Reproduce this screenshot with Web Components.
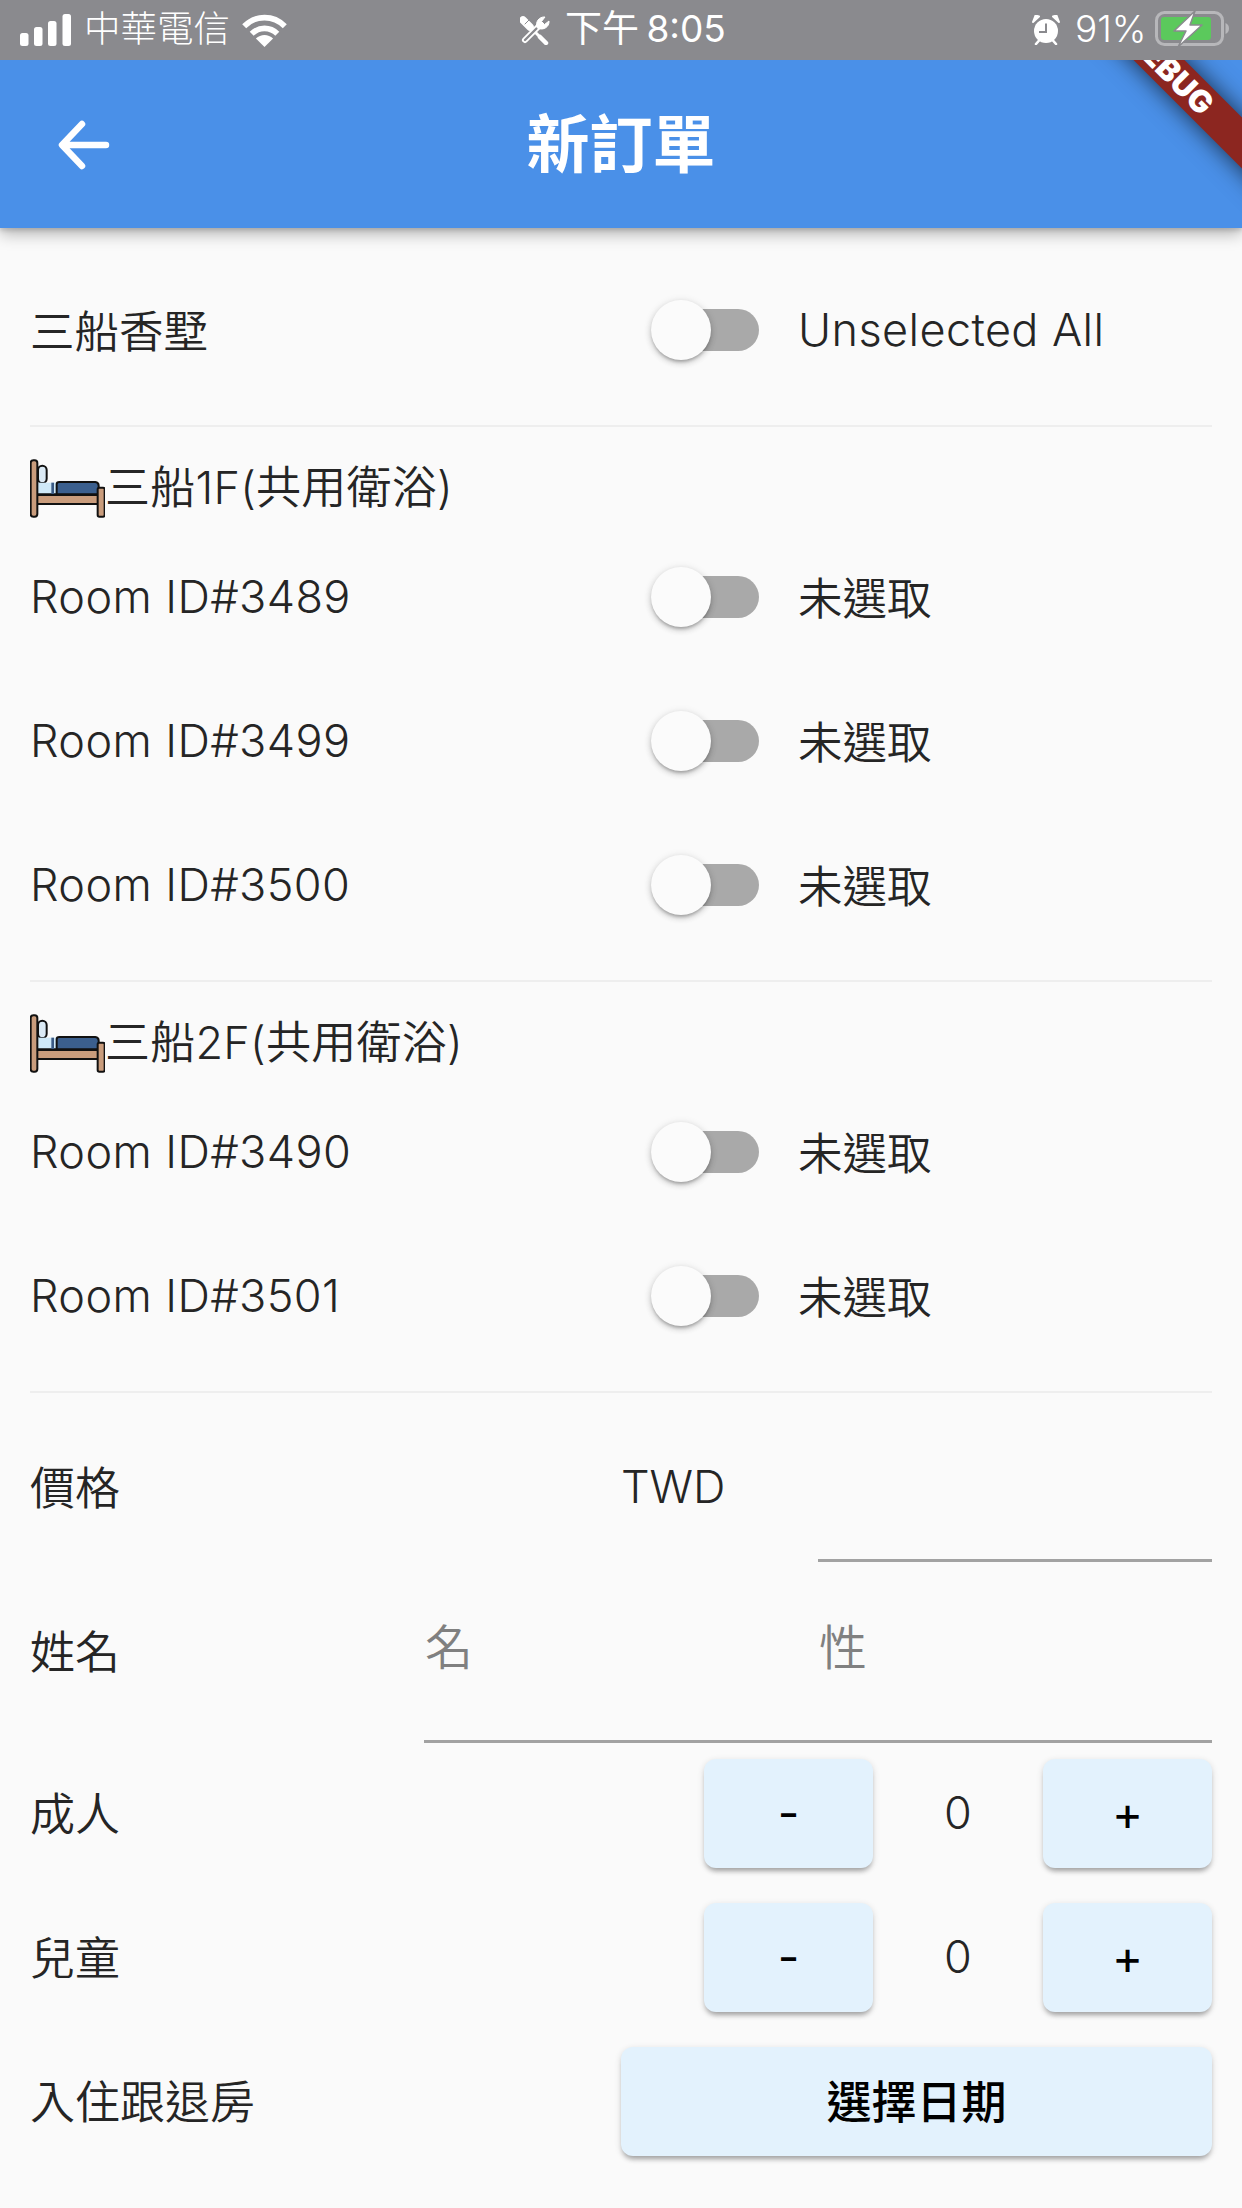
<!DOCTYPE html>
<html lang="zh-Hant"><head><meta charset="utf-8"><title>新訂單</title>
<style>
html,body{margin:0;padding:0;background:#fafafa}
body{width:1242px;height:2208px;overflow:hidden;font-family:Inter,"Noto Sans CJK TC",sans-serif;font-weight:350;color:#252525}
.cjk{display:inline-block;padding-top:3px;font-size:44.5px;letter-spacing:0}
</style></head><body>
<order-page>
  <status-bar slot="status"></status-bar>
  <app-bar slot="bar" title="新訂單"></app-bar>
  <switch-row><span slot="label" class="cjk">三船香墅</span><span slot="state">Unselected All</span></switch-row>
  <h-rule></h-rule>
  <section-title>三船1F(共用衛浴)</section-title>
  <switch-row><span slot="label">Room ID#3489</span><span slot="state" class="cjk">未選取</span></switch-row>
  <switch-row><span slot="label">Room ID#3499</span><span slot="state" class="cjk">未選取</span></switch-row>
  <switch-row><span slot="label">Room ID#3500</span><span slot="state" class="cjk">未選取</span></switch-row>
  <h-rule></h-rule>
  <section-title>三船2F(共用衛浴)</section-title>
  <switch-row><span slot="label">Room ID#3490</span><span slot="state" class="cjk">未選取</span></switch-row>
  <switch-row><span slot="label">Room ID#3501</span><span slot="state" class="cjk">未選取</span></switch-row>
  <h-rule></h-rule>
  <price-row></price-row>
  <name-row></name-row>
  <action-rows></action-rows>
</order-page>
<script>
function def(name, html, init){
  const t=document.createElement('template');t.innerHTML=html;
  customElements.define(name,class extends HTMLElement{
    constructor(){super();this.attachShadow({mode:'open'}).appendChild(t.content.cloneNode(true));}
    connectedCallback(){if(init)init(this);}
  });
}
def('order-page',`<style>
:host{display:block;width:1242px;height:2208px;position:relative;overflow:hidden;background:#fafafa}
.top{display:flex;flex-direction:column}
.body{display:flex;flex-direction:column;padding:30px 30px 0}
</style><div class="top"><slot name="status"></slot><slot name="bar"></slot></div><div class="body"><slot></slot></div>`);

def('status-bar',`<style>
:host{display:flex;align-items:center;height:60px;background:#8a8a8e;color:#fff;position:relative;z-index:3;font:300 37px/60px Inter,"Noto Sans CJK TC",sans-serif}
.l,.c,.r{display:flex;align-items:center;height:60px}
.l{width:500px;padding-left:20px;box-sizing:border-box}
.c{width:532px;padding-left:20px;box-sizing:border-box}
.r{flex:1}
svg{display:block;flex:none}
.carrier{margin-left:13px;margin-right:12px;font-size:36.5px;padding-bottom:2px;white-space:nowrap}
.time{margin-left:15px;white-space:nowrap;padding-bottom:2px;font-weight:400;word-spacing:-3px}
.pct{margin-left:15px;margin-right:8px;white-space:nowrap;padding-bottom:2px}
</style>
<div class="l">
<svg width="51" height="33" viewBox="0 0 51 33" fill="#fff"><rect x="0" y="19" width="8.5" height="13" rx="2.5"/><rect x="14" y="13" width="8.5" height="19" rx="2.5"/><rect x="28" y="7" width="8.5" height="25" rx="2.5"/><rect x="42.5" y="0" width="8.5" height="32" rx="2.5"/></svg>
<span class="carrier">中華電信</span>
<svg width="45" height="33" viewBox="0 0 45 33" fill="none" stroke="#fff" stroke-width="5.6"><path d="M2.2 12.2C13.5 .7 31.5 .7 42.8 12.2"/><path d="M9.7 19.8C16.8 12.6 28.2 12.6 35.3 19.8"/><path d="M22.5 33L13.9 24.6C18.6 19.9 26.4 19.9 31.1 24.6Z" fill="#fff" stroke="none"/></svg>
</div>
<div class="c">
<svg width="30" height="30" viewBox="0 0 30 30" fill="none" stroke-linecap="round"><path d="M3 5L10 12" stroke="#fff" stroke-width="7.5"/><path d="M5 9L9 5" stroke="#8a8a8e" stroke-width="1"/><path d="M10 12L20 22" stroke="#fff" stroke-width="3"/><path d="M20 22L26 28" stroke="#fff" stroke-width="4.5"/><path d="M5 25L18 12" stroke="#fff" stroke-width="6"/><path d="M5 25L18 12" stroke="#8a8a8e" stroke-width="2.4"/><path d="M17 12.5C15 7 19 1.5 25 2L21.5 6.5L24.5 9.5L29 6C29.5 12 23.5 15.5 18.5 13.5Z" fill="#fff" stroke="#fff" stroke-width="1"/></svg>
<span class="time">下午 8:05</span>
</div>
<div class="r">
<svg width="28" height="30" viewBox="0 0 28 30"><circle cx="14" cy="16" r="12" fill="#fff"/><path d="M1 7L7 1.5L3.5 .5ZM27 7L21 1.5L24.5 .5Z" fill="#fff" stroke="#fff" stroke-width="2" stroke-linejoin="round"/><path d="M4 29L7.5 25M24 29L20.5 25" stroke="#fff" stroke-width="2.6" stroke-linecap="round"/><path d="M14 8.5V17H7" fill="none" stroke="#8a8a8e" stroke-width="2"/></svg>
<span class="pct">91%</span>
<svg width="74" height="36" viewBox="0 0 74 36" style="margin-bottom:2px"><rect x="1.5" y="1.5" width="66" height="32" rx="8" fill="none" stroke="#b7b7ba" stroke-width="3"/><rect x="6" y="6" width="50" height="23" rx="3" fill="#5bc95c"/><path d="M70.5 12C73 13 74 15 74 17.5S73 22 70.5 23Z" fill="#b7b7ba"/><path d="M40 0L19 20H31L23 36L47 14H35Z" fill="#fff" stroke="#8a8a8e" stroke-width="1.5" stroke-linejoin="round"/></svg>
</div>`);

def('app-bar',`<style>
:host{display:flex;align-items:center;justify-content:center;height:168px;background:#4a90e8;position:relative;z-index:2;box-shadow:0 6px 15px rgba(0,0,0,.28),0 3px 4px rgba(0,0,0,.12)}
.back{position:absolute;left:57px;top:58px;display:block}
h1{margin:0;font:700 63px/1 Inter,"Noto Sans CJK TC",sans-serif;color:#fff;padding-top:1px}
</style>
<svg class="back" width="54" height="54" viewBox="0 0 54 54" fill="none" stroke="#fff" stroke-width="6.5" stroke-linecap="round" stroke-linejoin="round"><path d="M49 27H6M25 6L5 27L25 48"/></svg>
<h1></h1><debug-banner></debug-banner>`,el=>{el.shadowRoot.querySelector('h1').textContent=el.getAttribute('title');el.removeAttribute('title');});

def('debug-banner',`<style>
:host{position:absolute;left:968px;top:-9px;width:400px;height:36px;box-sizing:border-box;padding-left:6px;transform:rotate(45deg);background:#8c2620;box-shadow:0 0 24px rgba(0,0,0,.7);display:flex;align-items:center;justify-content:center;color:#fff;font:900 31px/36px Inter,sans-serif;letter-spacing:0}
</style>DEBUG`);

def('switch-row',`<style>
:host{display:flex;align-items:center;height:144px;font-size:45px;line-height:60px}
.label{width:621px;letter-spacing:.4px;white-space:nowrap}
.state{margin-left:39px;white-space:nowrap;letter-spacing:.4px}
</style><div class="label"><slot name="label"></slot></div><toggle-switch></toggle-switch><div class="state"><slot name="state"></slot></div>`);

def('toggle-switch',`<style>
:host{display:block;flex:none;width:108px;height:60px;position:relative}
.track{position:absolute;left:9px;top:9px;width:99px;height:42px;border-radius:21px;background:#a9a9a9}
.thumb{position:absolute;left:0;top:0;width:60px;height:60px;border-radius:50%;background:#fbfbfb;box-shadow:0 3px 3px -1px rgba(0,0,0,.2),0 3px 6px rgba(0,0,0,.16),0 1px 9px rgba(0,0,0,.1)}
</style><div class="track"></div><div class="thumb"></div>`);

def('h-rule',`<style>:host{display:block;height:2px;margin-top:23px;background:#eeeeee}</style>`);

def('section-title',`<style>
:host{display:flex;align-items:center;height:98px;box-sizing:border-box;padding-top:24px;font-size:45px;line-height:60px;white-space:nowrap;letter-spacing:.25px}
svg{display:block;flex:none;margin-right:0}
</style>
<svg width="75" height="65" viewBox="30 15 225 195" stroke="#111" stroke-width="6"><rect x="54" y="44" width="26" height="52" rx="13" fill="#dbeaf5"/><rect x="50" y="95" width="60" height="38" fill="#cfe9f8" stroke="none"/><path d="M50 130H235" stroke-width="6"/><path d="M98 95V130" stroke="#3a5a85" stroke-width="8"/><path d="M110 130V100Q110 93 118 93H226Q236 94 236 104V130Z" fill="#3b5f8e"/><rect x="50" y="132" width="185" height="27" fill="#c99c7c"/><rect x="32" y="28" width="20" height="169" rx="8" fill="#c99c7c"/><rect x="233" y="110" width="21" height="87" rx="5" fill="#c99c7c"/></svg>
<span><slot></slot></span>`);

def('price-row',`<style>
:host{display:flex;height:169px;font-size:45px;line-height:60px;box-sizing:border-box}
.label{width:592px;padding-top:66px;height:60px}
.twd{width:196px;padding-top:64px;height:60px;margin-left:-1px;padding-right:1px}
.field{flex:1;border-bottom:3px solid #a2a2a2}
</style><div class="label">價格</div><div class="twd">TWD</div><div class="field"></div>`);

def('name-row',`<style>
:host{display:flex;height:181px;font-size:45px;line-height:60px}
.label{width:394px;padding-top:61px;height:60px}
.field{flex:1;display:flex;border-bottom:3px solid #a2a2a2;color:#808080;font-size:48px;padding-top:56px;box-sizing:border-box}
.field span{flex:1;display:block;height:60px;padding-left:1px}
</style><div class="label">姓名</div><div class="field"><span>名</span><span>性</span></div>`);

def('action-button',`<style>
:host{display:flex;align-items:center;justify-content:center;height:109px;background:#e3f2fd;border-radius:12px;color:#000;font:500 45px/1 Inter,"Noto Sans CJK TC",sans-serif;box-shadow:0 5px 5px -2px rgba(0,0,0,.28),0 2px 7px rgba(0,0,0,.14);flex:none;box-sizing:border-box}
</style><slot></slot>`);

def('stepper-row',`<style>
:host{display:flex;align-items:center;height:109px;font-size:45px;line-height:60px;white-space:nowrap}
.label{flex:1;padding-top:2px}
action-button{width:169px;font-size:47px;font-weight:400;padding-bottom:3px}
.n{width:170px;text-align:center;padding-bottom:1px}
</style><div class="label"><slot></slot></div><action-button>-</action-button><div class="n">0</div><action-button>+</action-button>`);

def('action-rows',`<style>
:host{display:flex;flex-direction:column;gap:35px;margin-top:16px;font-size:45px;line-height:60px}
.date{display:flex;align-items:center;height:109px}
.label{flex:1;padding-top:2px}
action-button{width:591px;padding-top:2px}
</style><stepper-row>成人</stepper-row><stepper-row>兒童</stepper-row><div class="date"><div class="label">入住跟退房</div><action-button>選擇日期</action-button></div>`);
</script>
</body></html>
